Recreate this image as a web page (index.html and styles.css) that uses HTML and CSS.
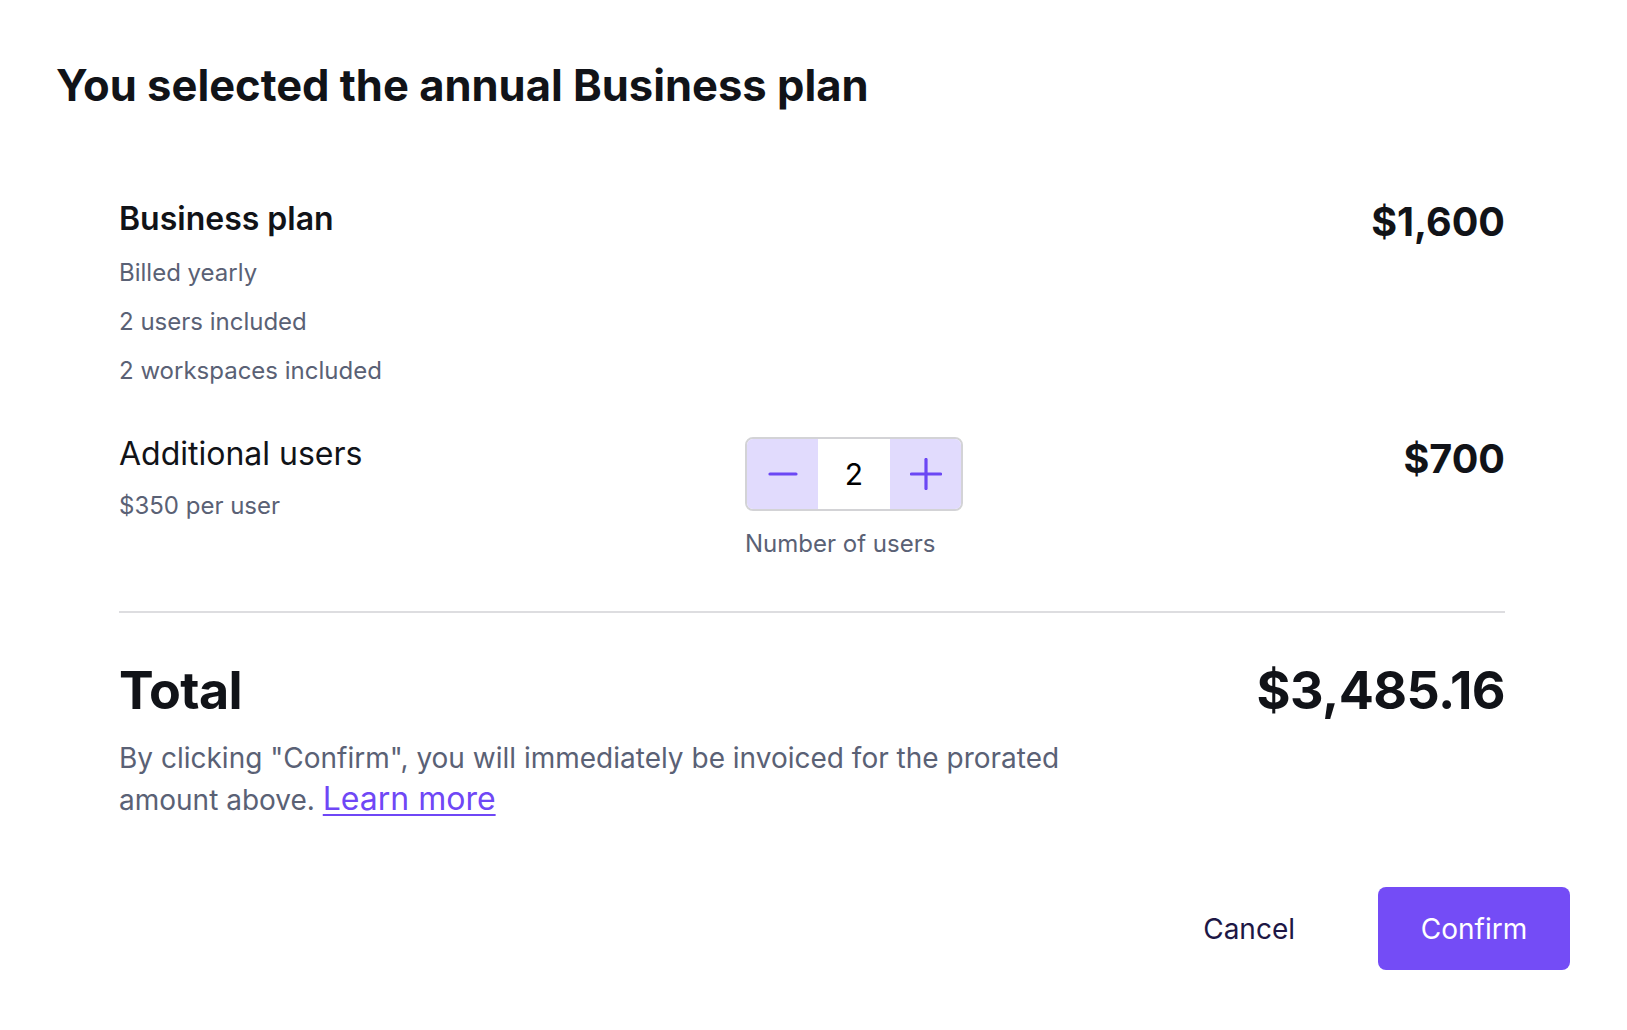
FILE: index.html
```html
<!DOCTYPE html>
<html>
<head>
    <meta charset="UTF-8">
    <title>Confirm plan</title>
    <link rel="stylesheet" href="styles.css">
</head>
<body>
    <div class="dialog">
        <h1 class="title">You selected the annual Business plan</h1>

        <div class="summary">
            <!-- Base plan -->
            <div class="line-item plan">
                <div class="item-info">
                    <h2 class="item-name">Business plan</h2>
                    <ul class="features">
                        <li>Billed yearly</li>
                        <li>2 users included</li>
                        <li>2 workspaces included</li>
                    </ul>
                </div>
                <div class="item-price">$1,600</div>
            </div>

            <!-- Add-on users -->
            <div class="line-item addon">
                <div class="item-info">
                    <h3 class="addon-name">Additional users</h3>
                    <div class="addon-rate">$350 per user</div>
                </div>
                <div class="qty">
                    <div class="stepper">
                        <button class="step-btn" aria-label="Remove user">
                            <svg width="32" height="32" viewBox="0 0 32 32"><line x1="3" y1="16" x2="29" y2="16" stroke="#6b47f4" stroke-width="3.2" stroke-linecap="round"/></svg>
                        </button>
                        <input class="step-value" type="text" value="2" readonly>
                        <button class="step-btn" aria-label="Add user">
                            <svg width="32" height="32" viewBox="0 0 32 32"><line x1="1.5" y1="16" x2="30.5" y2="16" stroke="#6b47f4" stroke-width="3.2" stroke-linecap="round"/><line x1="16" y1="1.5" x2="16" y2="30.5" stroke="#6b47f4" stroke-width="3.2" stroke-linecap="round"/></svg>
                        </button>
                    </div>
                    <span class="qty-label">Number of users</span>
                </div>
                <div class="item-price addon-price">$700</div>
            </div>

            <hr class="divider">

            <div class="total-row">
                <span class="total-label">Total</span>
                <span class="total-price">$3,485.16</span>
            </div>
            <p class="note">By clicking "Confirm", you will immediately be invoiced for the prorated amount above. <a href="#">Learn more</a></p>
        </div>

        <div class="actions">
            <button class="cancel-btn">Cancel</button>
            <button class="confirm-btn">Confirm</button>
        </div>
    </div>
</body>
</html>
```

FILE: styles.css
```css
body {
    margin: 0;
    background: #fff;
    font-family: Inter, 'Noto Sans', sans-serif;
    color: #111318;
}

.dialog {
    padding: 59px 57px 0 56px;
}

.title {
    margin: 0;
    font-size: 43.5px;
    line-height: 52px;
    font-weight: 700;
    color: #111318;
}

.summary {
    margin: 89px 65px 0 63px;
}

.line-item.plan {
    display: flex;
    justify-content: space-between;
    align-items: flex-start;
}

.item-name {
    margin: 0;
    font-size: 32px;
    line-height: 38px;
    font-weight: 600;
}

.features {
    list-style: none;
    margin: 10px 0 0 0;
    padding: 0;
    font-size: 24px;
    line-height: 49px;
    color: #5a6175;
}

.item-price {
    font-size: 39.5px;
    line-height: 36px;
    font-weight: 700;
}

.plan .item-price {
    margin-top: 4px;
}

.line-item.addon {
    margin-top: 40px;
    display: grid;
    grid-template-columns: 626px auto 1fr;
    align-items: start;
}

.addon-name {
    margin: 0;
    font-size: 32px;
    line-height: 38px;
    font-weight: 400;
}

.addon-rate {
    margin-top: 18px;
    font-size: 24px;
    line-height: 30px;
    color: #5a6175;
}

.qty {
    display: flex;
    flex-direction: column;
    align-items: flex-start;
    gap: 18px;
    padding-top: 2px;
}

.stepper {
    display: flex;
    height: 74px;
    box-sizing: border-box;
    border: 2px solid #d3d3d6;
    border-radius: 8px;
    overflow: hidden;
}

.step-btn {
    width: 71px;
    border: none;
    padding: 0;
    background: #e1dbfd;
    display: flex;
    align-items: center;
    justify-content: center;
    cursor: pointer;
}

.step-value {
    width: 72px;
    border: none;
    padding: 0;
    background: #fff;
    text-align: center;
    font-family: inherit;
    font-size: 30px;
    color: #000;
    outline: none;
}

.qty-label {
    font-size: 24px;
    line-height: 30px;
    color: #5a6175;
}

.addon-price {
    justify-self: end;
    margin-top: 6px;
}

.divider {
    margin: 52px 0 0 0;
    border: none;
    height: 2px;
    background: #dddde0;
}

.total-row {
    margin-top: 46px;
    display: flex;
    justify-content: space-between;
    align-items: baseline;
    font-size: 52px;
    line-height: 64px;
    font-weight: 700;
    letter-spacing: -0.6px;
}

.note {
    margin: 14px 0 0 0;
    max-width: 1000px;
    font-size: 28px;
    line-height: 42px;
    color: #5a6175;
}

.note a {
    font-size: 32px;
    line-height: 1;
    color: #6f47f6;
    text-decoration: underline;
    text-decoration-thickness: 2px;
    text-underline-offset: 4px;
}

.actions {
    margin-top: 66px;
    display: flex;
    justify-content: flex-end;
    align-items: center;
    gap: 51px;
}

.cancel-btn {
    height: 83px;
    padding: 0 32px;
    border: none;
    background: none;
    font-family: inherit;
    font-size: 28px;
    color: #1d1745;
    cursor: pointer;
}

.confirm-btn {
    height: 83px;
    width: 192px;
    border: none;
    border-radius: 8px;
    background: #744cf6;
    color: #fff;
    font-family: inherit;
    font-size: 28px;
    cursor: pointer;
}
```
